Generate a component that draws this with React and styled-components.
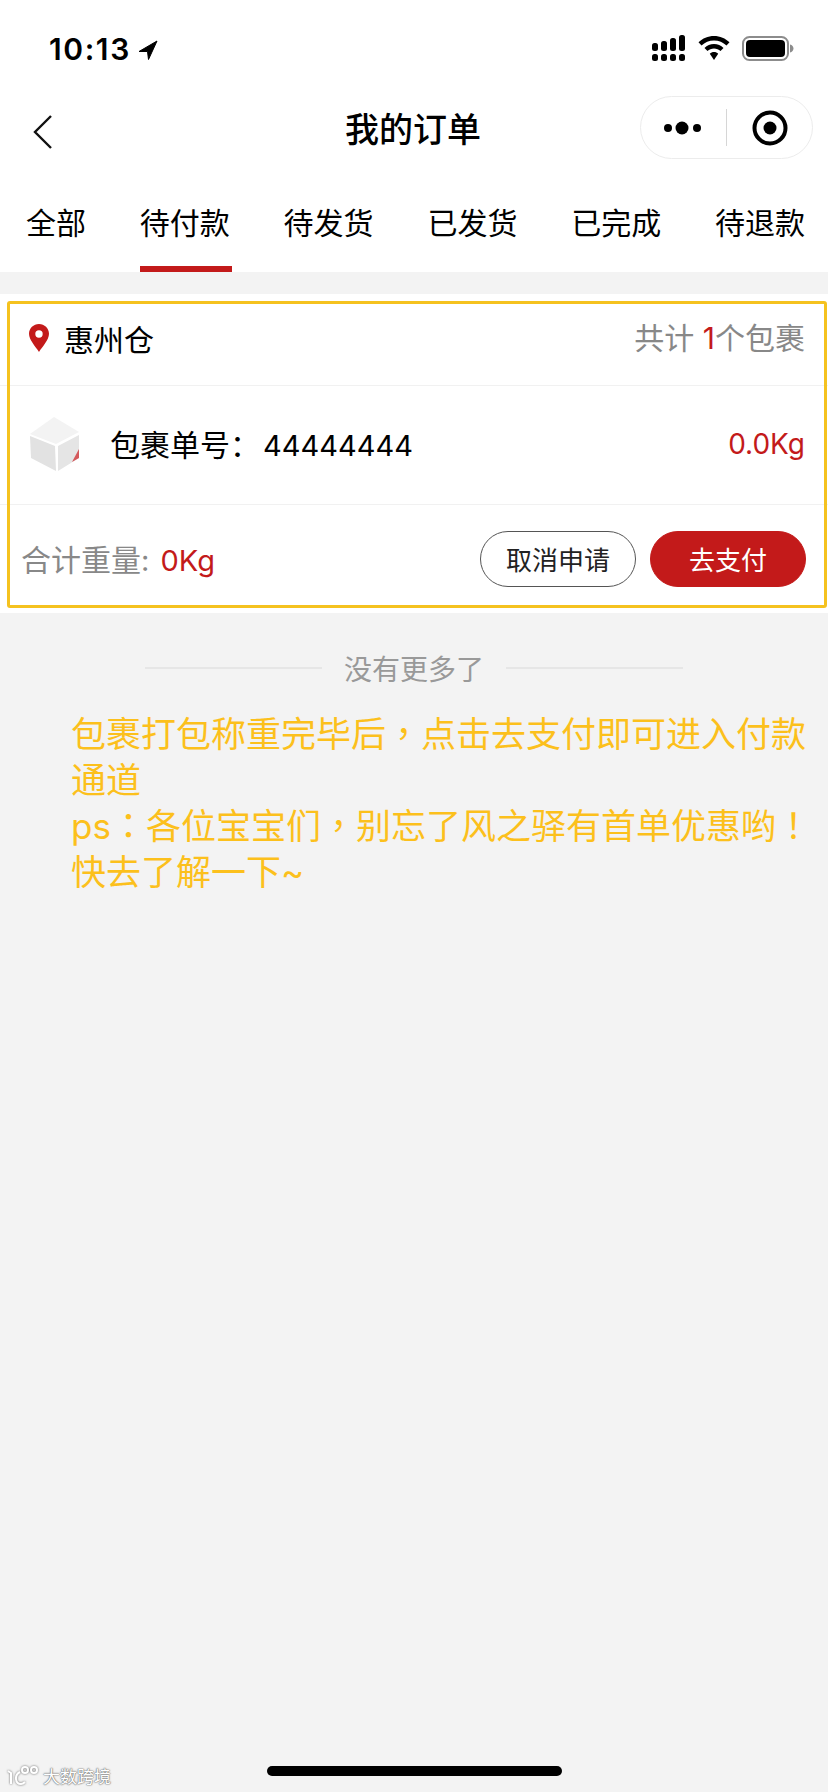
import React from 'react';
import styled, { createGlobalStyle } from 'styled-components';

const RED = '#c31a1a';
const CJK = '"Noto Sans CJK SC", "Noto Sans", sans-serif';

const Global = createGlobalStyle`
  html, body { margin: 0; padding: 0; background: #f3f3f3; }
  * { box-sizing: border-box; }
  body { font-family: "Inter", ${CJK}; }
`;

const Page = styled.div`
  position: relative;
  width: 828px;
  height: 1792px;
  background: #f3f3f3;
  overflow: hidden;
  display: flex;
  flex-direction: column;
`;

const Head = styled.header`
  background: #fff;
  height: 272px;
  display: flex;
  flex-direction: column;
`;

const StatusBar = styled.div`
  height: 96px;
  padding: 37px 34px 0 49px;
  display: flex;
  justify-content: space-between;
  align-items: flex-start;
`;

const Clock = styled.div`
  display: flex;
  align-items: center;
  gap: 7px;
  font: 600 30px/25px "Inter", sans-serif;
  letter-spacing: 1.6px;
  color: #000;
`;

const StatusIcons = styled.div`
  display: flex;
  align-items: center;
  gap: 12px;
  margin-top: -2px;
`;

const Nav = styled.div`
  position: relative;
  height: 63px;
  display: flex;
  align-items: center;
  justify-content: center;
  padding: 0 15px 0 33px;
`;

const Back = styled.svg`
  margin-right: auto;
  margin-top: 8px;
`;

const Title = styled.h1`
  position: absolute;
  left: 345px;
  top: 10px;
  margin: 0;
  font: 500 34px/44px ${CJK};
  color: #000;
`;

const Capsule = styled.div`
  width: 173px;
  height: 63px;
  border: 1px solid #ececec;
  border-radius: 32px;
  background: #fff;
  display: flex;
  align-items: center;
`;

const CapsuleDivider = styled.span`
  width: 1px;
  height: 37px;
  background: #d6d6d6;
`;

const CapsuleSlot = styled.div`
  flex: 1;
  display: flex;
  justify-content: center;
  align-items: center;
`;

const Tabs = styled.nav`
  flex: 1;
  display: flex;
  justify-content: space-between;
  padding: 0 23px 0 26px;
`;

const Tab = styled.div`
  position: relative;
  height: 100%;
  padding-top: 42px;
  font: 400 30px/40px ${CJK};
  color: #000;
  ${p => p.$active && `
    &::after {
      content: '';
      position: absolute;
      left: 0;
      right: -2px;
      bottom: 0;
      height: 6px;
      background: ${RED};
    }
  `}
`;

const Card = styled.section`
  position: relative;
  margin-top: 22px;
  height: 319px;
  background: #fff;
  display: flex;
  flex-direction: column;
`;

const Frame = styled.div`
  position: absolute;
  left: 7px;
  right: 1px;
  top: 7px;
  bottom: 5px;
  border: 3px solid #f5c21f;
  border-radius: 3px;
  pointer-events: none;
`;

const CardHead = styled.div`
  height: 92px;
  padding: 0 23px 4px 29px;
  border-bottom: 1px solid #f1f1f1;
  display: flex;
  align-items: center;
  justify-content: space-between;
`;

const Place = styled.div`
  display: flex;
  align-items: center;
  gap: 15px;
  font: 400 30px/40px ${CJK};
  color: #000;
`;

const Count = styled.div`
  font: 400 30px/40px "Inter", ${CJK};
  color: #888;
`;

const Red = styled.span`
  color: ${RED};
  margin-left: ${p => p.$gap || 0}px;
`;

const ParcelRow = styled.div`
  height: 119px;
  padding: 0 23px 2px 30px;
  border-bottom: 1px solid #f1f1f1;
  display: flex;
  align-items: center;
  gap: 30px;
  font: 400 30px/40px ${CJK};
  color: #000;
`;

const ParcelNo = styled.span`
  flex: 1;
  font-family: "Inter", ${CJK};
  font-size: 29px;
`;

const ParcelLabel = styled.span`
  font-family: ${CJK};
  font-size: 30px;
  margin-right: 3px;
`;

const Weight = styled.span`
  color: ${RED};
  font-family: "Inter", sans-serif;
  font-size: 28px;
`;

const CardFoot = styled.div`
  flex: 1;
  padding: 0 22px 0 21px;
  display: flex;
  align-items: center;
  justify-content: space-between;
`;

const Total = styled.div`
  font: 400 29px/40px "Inter", ${CJK};
  color: #888;
  white-space: nowrap;
`;

const TotalLabel = styled.span`
  font-family: ${CJK};
  font-size: 30px;
`;

const Actions = styled.div`
  display: flex;
  gap: 14px;
`;

const Btn = styled.div`
  width: 156px;
  height: 56px;
  border-radius: 28px;
  display: flex;
  align-items: center;
  justify-content: center;
  font: 400 26px/34px ${CJK};
  border: 1px solid ${p => (p.$primary ? RED : '#555')};
  background: ${p => (p.$primary ? RED : '#fff')};
  color: ${p => (p.$primary ? '#fff' : '#222')};
`;

const EndLine = styled.div`
  margin-top: 33px;
  padding: 0 145px;
  height: 44px;
  display: flex;
  align-items: center;
  gap: 22px;
  font: 400 28px/44px ${CJK};
  color: #999;
  white-space: nowrap;
`;

const Rule = styled.span`
  flex: 1;
  height: 2px;
  background: #e6e6e6;
`;

const Notice = styled.p`
  margin: 21px 0 0 71px;
  font: 400 35px/46px "Inter", ${CJK};
  color: #fcc01c;
`;

const Punct = styled.span`
  font-family: "Noto Sans CJK TC", sans-serif;
  line-height: 0;
`;

const Watermark = styled.div`
  position: absolute;
  left: 7px;
  bottom: 6px;
  display: flex;
  align-items: center;
  gap: 3px;
  font: 400 17px/21px ${CJK};
  color: #fff;
  text-shadow: 0 0 2px #777, 0 0 1px #777, 0 0 1px #777;
`;

const HomeBar = styled.div`
  position: absolute;
  left: 267px;
  top: 1766px;
  width: 295px;
  height: 10px;
  border-radius: 5px;
  background: #000;
`;

const Arrow = () => (
  <svg width="20" height="20" viewBox="0 0 20 20">
    <path d="M19 1 L1 11.500 L9.500 11.500 L10.500 19.500 Z" fill="#000" stroke="#000" strokeWidth="1" strokeLinejoin="round" />
  </svg>
);

const Signal = () => (
  <svg width="34" height="26" viewBox="0 0 34 26" fill="#000">
    <rect x="0" y="8" width="6" height="8" rx="2.500" />
    <rect x="0" y="19" width="6" height="7" rx="2.500" />
    <rect x="9" y="6" width="6" height="10" rx="2.500" />
    <rect x="9" y="19" width="6" height="7" rx="2.500" />
    <rect x="18" y="3" width="6" height="13" rx="2.500" />
    <rect x="18" y="19" width="6" height="7" rx="2.500" />
    <rect x="27" y="0" width="6" height="16" rx="2.500" />
    <rect x="27" y="19" width="6" height="7" rx="2.500" />
  </svg>
);

const Wifi = () => (
  <svg width="32" height="24" viewBox="0 0 32 24" fill="#000">
    <path d="M16 0C10 0 4.600 2.400 0.500 6.300L3.500 9.500C6.800 6.300 11.200 4.400 16 4.400S25.200 6.300 28.500 9.500L31.500 6.300C27.400 2.400 22 0 16 0Z" />
    <path d="M16 8C12.300 8 9 9.500 6.500 11.900L9.500 15C11.200 13.400 13.500 12.400 16 12.400S20.800 13.400 22.500 15L25.500 11.900C23 9.500 19.700 8 16 8Z" />
    <path d="M16 16C14.400 16 12.900 16.600 11.800 17.700L16 24L20.200 17.700C19.100 16.600 17.600 16 16 16Z" />
  </svg>
);

const Battery = () => (
  <svg width="52" height="25" viewBox="0 0 52 25">
    <rect x="1" y="1" width="45" height="23" rx="6.500" fill="none" stroke="#8c8c8c" strokeWidth="2" />
    <rect x="4" y="4" width="39" height="17" rx="4" fill="#000" />
    <path d="M48 8.500c2.200.6 3.500 2.100 3.500 4s-1.300 3.400-3.500 4z" fill="#8c8c8c" />
  </svg>
);

const Pin = () => (
  <svg width="20" height="28" viewBox="0 0 20 28">
    <path fillRule="evenodd" d="M10 0C4.500 0 0 4.300 0 9.800 0 16 6.500 22.500 10 28c3.500-5.500 10-12 10-18.200C20 4.300 15.500 0 10 0Zm0 6.300a3.700 3.700 0 1 1 0 7.400 3.700 3.700 0 0 1 0-7.400Z" fill={RED} />
  </svg>
);

const Box = () => (
  <svg width="50" height="54" viewBox="0 0 50 54">
    <path d="M24 0 49 15 26 27 0 17Z" fill="#f3f3f3" />
    <path d="M0 19 25 29 26 54 1 41Z" fill="#e2e2e2" />
    <path d="M28 29 49 18 49 41 28 54Z" fill="#e5e5e5" />
    <path d="M49 32 49 41 42 45Z" fill="#d4595c" />
  </svg>
);

const LOGO = (
  <svg width="33" height="20" viewBox="0 0 33 20" fill="none" stroke="#fff" strokeWidth="2" style={{ filter: 'drop-shadow(0 0 1px #666)' }}>
    <path d="M1 5 4 7V18" />
    <path d="M13 6C7 9 8 18 14 18C16 18 17 17 18 16" />
    <circle cx="18" cy="4" r="3" />
    <circle cx="27" cy="4" r="3" />
  </svg>
);

export default function App() {
  return (
    <Page>
      <Global />
      <Head>
        <StatusBar>
          <Clock>10:13<Arrow /></Clock>
          <StatusIcons><Signal /><Wifi /><Battery /></StatusIcons>
        </StatusBar>
        <Nav>
          <Back width="20" height="34" viewBox="0 0 20 34" fill="none" stroke="#111" strokeWidth="2.400">
            <path d="M18 1 2 17l16 16" />
          </Back>
          <Title>我的订单</Title>
          <Capsule>
            <CapsuleSlot>
              <svg width="40" height="14" viewBox="0 0 40 14" fill="#000">
                <circle cx="4" cy="7" r="4" />
                <circle cx="18" cy="7" r="6.500" />
                <circle cx="33" cy="7" r="4" />
              </svg>
            </CapsuleSlot>
            <CapsuleDivider />
            <CapsuleSlot>
              <svg width="36" height="36" viewBox="0 0 36 36" fill="none">
                <circle cx="18" cy="18" r="15.500" stroke="#000" strokeWidth="4" />
                <circle cx="18" cy="18" r="6.500" fill="#000" />
              </svg>
            </CapsuleSlot>
          </Capsule>
        </Nav>
        <Tabs>
          <Tab>全部</Tab>
          <Tab $active>待付款</Tab>
          <Tab>待发货</Tab>
          <Tab>已发货</Tab>
          <Tab>已完成</Tab>
          <Tab>待退款</Tab>
        </Tabs>
      </Head>

      <Card>
        <CardHead>
          <Place><Pin />惠州仓</Place>
          <Count>共计 <Red>1</Red>个包裹</Count>
        </CardHead>
        <ParcelRow>
          <Box />
          <ParcelNo><ParcelLabel>包裹单号：</ParcelLabel>44444444</ParcelNo>
          <Weight>0.0Kg</Weight>
        </ParcelRow>
        <CardFoot>
          <Total><TotalLabel>合计重量</TotalLabel>: <Red $gap={3}>0Kg</Red></Total>
          <Actions>
            <Btn>取消申请</Btn>
            <Btn $primary>去支付</Btn>
          </Actions>
        </CardFoot>
        <Frame />
      </Card>

      <EndLine><Rule />没有更多了<Rule /></EndLine>
      <Notice>
        包裹打包称重完毕后<Punct>，</Punct>点击去支付即可进入付款通道<br />
        ps<Punct>：</Punct>各位宝宝们<Punct>，</Punct>别忘了风之驿有首单优惠哟<Punct>！</Punct>快去了解一下~
      </Notice>

      <Watermark>{LOGO}大数跨境</Watermark>
      <HomeBar />
    </Page>
  );
}
